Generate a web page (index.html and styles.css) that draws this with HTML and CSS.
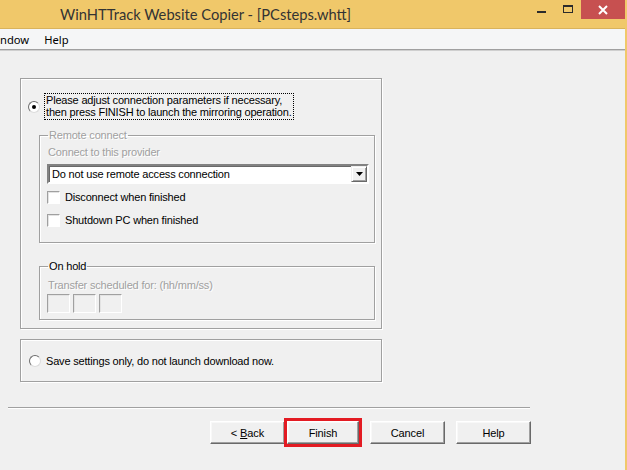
FILE: index.html
```html
<!DOCTYPE html>
<html>
<head>
<meta charset="utf-8">
<link rel="stylesheet" href="styles.css">
</head>
<body>
<div class="window">
  <div class="titlebar">
    <span class="title">WinHTTrack Website Copier - [PCsteps.whtt]</span>
    <div class="controls">
      <span class="ctl min"><span class="min-bar"></span></span>
      <span class="ctl max"><span class="max-box"></span></span>
      <span class="ctl close">
        <svg width="10" height="10" viewBox="0 0 10 10"><path d="M1 1L9 9M9 1L1 9" stroke="#fff" stroke-width="2"/></svg>
      </span>
    </div>
  </div>
  <div class="menubar">
    <span class="menu-item first">ndow</span>
    <span class="menu-item">Help</span>
  </div>
  <div class="client">
    <div class="group main">
      <div class="option-row">
        <span class="radio checked"></span>
        <span class="focus-label">Please adjust connection parameters if necessary,<br>then press FINISH to launch the mirroring operation.</span>
      </div>
      <fieldset class="fs remote">
        <legend class="disabled">Remote connect</legend>
        <div class="line disabled">Connect to this provider</div>
        <div class="combo">
          <span class="combo-text">Do not use remote access connection</span>
          <span class="combo-btn"><svg width="7" height="4" viewBox="0 0 7 4"><path d="M0 0H7L3.5 4Z" fill="#000"/></svg></span>
        </div>
        <label class="check-row first"><span class="checkbox"></span>Disconnect when finished</label>
        <label class="check-row second"><span class="checkbox"></span>Shutdown PC when finished</label>
      </fieldset>
      <fieldset class="fs hold">
        <legend>On hold</legend>
        <div class="line disabled">Transfer scheduled for: (hh/mm/ss)</div>
        <div class="time-row">
          <span class="tbox"></span>
          <span class="tbox"></span>
          <span class="tbox"></span>
        </div>
      </fieldset>
    </div>
    <div class="group save">
      <span class="radio"></span>
      <span class="save-text">Save settings only, do not launch download now.</span>
    </div>
    <div class="separator"></div>
    <div class="buttons">
      <button class="btn back">&lt; <u>B</u>ack</button>
      <button class="btn finish">Finish</button>
      <button class="btn cancel">Cancel</button>
      <button class="btn help">Help</button>
    </div>
  </div>
</div>
</body>
</html>
```
FILE: styles.css
```css
html, body {
  margin: 0;
  padding: 0;
  width: 627px;
  height: 470px;
  overflow: hidden;
  background: #f0c86a;
}
.window {
  width: 625px;
  height: 470px;
  display: flex;
  flex-direction: column;
  border-right: 2px solid #f0c86a;
  font-family: "Liberation Sans", Arial, sans-serif;
  font-size: 11px;
  letter-spacing: -0.18px;
  color: #000;
}
.titlebar {
  height: 28px;
  border-bottom: 1px solid #d9b35c;
  background: #f0c86a;
  display: flex;
  align-items: flex-start;
}
.title {
  font-family: Lato, "Open Sans", sans-serif;
  font-size: 14.7px;
  letter-spacing: 0;
  color: #333;
  margin-left: 60px;
  margin-top: 5px;
  line-height: 18px;
}
.controls {
  margin-left: auto;
  display: flex;
  align-items: flex-start;
}
.ctl {
  display: flex;
  height: 19px;
}
.min {
  width: 26px;
}
.min-bar {
  width: 9px;
  height: 2px;
  background: #2b2b2b;
  margin-top: 11px;
}
.max {
  width: 18px;
}
.max-box {
  width: 8px;
  height: 5px;
  border: 1px solid #2b2b2b;
  border-top-width: 2px;
  margin-top: 5px;
}
.close {
  width: 44px;
  background: #c75050;
  align-items: center;
  justify-content: center;
}
.menubar {
  height: 20px;
  background: #f5f6f7;
  border-bottom: 1px solid #a0a0a0;
  display: flex;
  align-items: center;
  font-family: "Noto Sans", "Open Sans", sans-serif;
  font-size: 11.2px;
  letter-spacing: 0;
  color: #000;
}
.menu-item.first {
  margin-left: 0;
}
.menu-item {
  margin-left: 15px;
}
.client {
  flex: 1;
  background: #f0f0f0;
  border-top: 1px solid #cfcfcf;
  display: flex;
  flex-direction: column;
}
.group {
  box-sizing: border-box;
  margin-left: 20px;
  width: 362px;
  border: 1px solid #a0a0a0;
  box-shadow: 1px 1px 0 #fff, inset 1px 1px 0 #fff;
}
.main {
  margin-top: 27px;
  height: 251px;
  display: flex;
  flex-direction: column;
}
.option-row {
  display: flex;
  align-items: center;
  margin-top: 14px;
  margin-left: 7px;
}
.radio {
  box-sizing: border-box;
  width: 12px;
  height: 12px;
  border-radius: 50%;
  border: 1px solid #8a8a8a;
  border-top-color: #6d6d6d;
  border-left-color: #6d6d6d;
  border-right-color: #dcdcdc;
  border-bottom-color: #dcdcdc;
  background: #fff;
  display: flex;
  align-items: center;
  justify-content: center;
  flex: none;
}
.radio.checked::after {
  content: "";
  width: 4px;
  height: 4px;
  border-radius: 50%;
  background: #000;
}
.focus-label {
  margin-left: 4px;
  border: 1px dotted #000;
  padding: 0 1px 1px 1px;
  line-height: 12px;
  white-space: nowrap;
}
.fs {
  box-sizing: border-box;
  margin: 9px 0 0 18px;
  width: 336px;
  border: 1px solid #a0a0a0;
  box-shadow: 1px 1px 0 #fff, inset 1px 1px 0 #fff;
  padding: 0 6px 15px 7px;
  min-width: 0;
}
.fs legend {
  padding: 0 1px;
  margin-left: 1px;
  line-height: 13px;
}
.disabled {
  color: #a0a0a0;
  text-shadow: 1px 1px 0 #fff;
}
.line {
  line-height: 13px;
  margin-top: 4px;
  margin-left: 1px;
}
.combo {
  box-sizing: border-box;
  margin-top: 5px;
  width: 322px;
  height: 20px;
  background: #fff;
  border: 2px solid;
  border-color: #828282 #fff #fff #828282;
  box-shadow: inset 1px 1px 0 #696969;
  display: flex;
  align-items: center;
}
.combo-text {
  margin-left: 3px;
  flex: 1;
}
.combo-btn {
  box-sizing: border-box;
  width: 16px;
  height: 16px;
  background: #f0f0f0;
  border: 1px solid;
  border-color: #f0f0f0 #696969 #696969 #f0f0f0;
  box-shadow: inset 1px 1px 0 #fff, inset -1px -1px 0 #a0a0a0;
  display: flex;
  align-items: center;
  justify-content: center;
}
.check-row {
  display: flex;
  align-items: center;
  line-height: 13px;
}
.check-row.first {
  margin-top: 7px;
}
.check-row.second {
  margin-top: 10px;
}
.checkbox {
  box-sizing: border-box;
  width: 13px;
  height: 13px;
  background: #fff;
  border: 1px solid;
  border-color: #a0a0a0 #fff #fff #a0a0a0;
  box-shadow: inset 1px 1px 0 #e3e3e3;
  margin-right: 5px;
}
.hold {
  margin-top: 17px;
  padding-bottom: 6px;
}
.hold .line {
  margin-top: 6px;
}
.time-row {
  display: flex;
  gap: 3px;
  margin-top: 2px;
}
.tbox {
  box-sizing: border-box;
  width: 23px;
  height: 19px;
  background: #f0f0f0;
  border: 1px solid;
  border-color: #a0a0a0 #fff #fff #a0a0a0;
  box-shadow: inset 1px 1px 0 #e3e3e3;
}
.save {
  margin-top: 10px;
  height: 43px;
  display: flex;
  align-items: center;
  padding-left: 8px;
  padding-top: 1px;
}
.save-text {
  margin-left: 5px;
}
.separator {
  margin-top: 25px;
  margin-left: 8px;
  width: 522px;
  height: 1px;
  background: #a0a0a0;
  border-bottom: 1px solid #fff;
}
.buttons {
  display: flex;
  margin-top: 12px;
  margin-left: 210px;
}
.btn {
  box-sizing: border-box;
  height: 23px;
  width: 75px;
  padding: 0;
  margin: 0;
  font-family: "Liberation Sans", Arial, sans-serif;
  font-size: 11px;
  letter-spacing: -0.1px;
  color: #000;
  background: #f0f0f0;
  border: 1px solid;
  border-color: #fff #696969 #696969 #fff;
  box-shadow: inset -1px -1px 0 #a0a0a0, inset 1px 1px 0 #f8f8f8;
  border-radius: 0;
}
.finish {
  width: 72px;
  margin-left: 2px;
  outline: 3px solid #e31b23;
  outline-offset: 0;
}
.cancel, .help {
  margin-left: 11px;
}
```
